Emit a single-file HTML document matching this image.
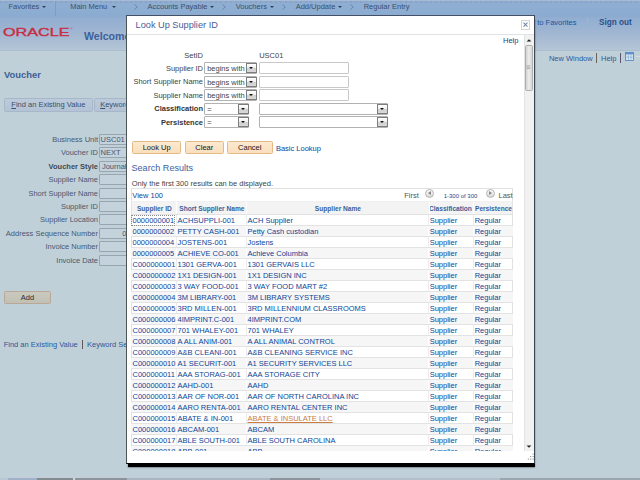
<!DOCTYPE html>
<html lang="en"><head><meta charset="utf-8"><title>Voucher - Look Up Supplier ID</title>
<style>
html,body{margin:0;padding:0}
body{width:640px;height:480px;overflow:hidden;position:relative;background:#c0d0d9;font-family:"Liberation Sans",Arial,sans-serif;font-size:7.5px;color:#46535f}
*{box-sizing:border-box}
.t{position:absolute;white-space:nowrap;line-height:10px;height:10px}
.b{font-weight:bold}
.r8{text-align:right}
#hdr{position:absolute;left:0;top:0;width:640px;height:51px;background:linear-gradient(#8fafd3 0,#8cabd0 15.5px,#8aa8cd 16px,#90add1 17px,#99b2d2 26px,#a4b8d2 36px,#b4c6d7 50px)}
#hdrline{position:absolute;left:0;top:50px;width:640px;height:1px;background:#adbccf}
#navdash{position:absolute;left:0;top:1px;width:640px;height:2px;background:repeating-linear-gradient(90deg,#8a9fcb 0,#8a9fcb 2.2px,#90abcb 2.2px,#90abcb 5px);opacity:.85}
#navtop{position:absolute;left:0;top:0;width:640px;height:1px;background:#a5bbd6}
.nav{color:#3b506f}
.tri{position:absolute;width:0;height:0;border-left:2.4px solid transparent;border-right:2.4px solid transparent;border-top:2.8px solid #303f55}
.chev{position:absolute;width:4px;height:6px}
.vdiv{position:absolute;width:1px;background:#7f9dc2}
.lnk{color:#2b5899}
.plbl{color:#4a5870}
.pin{position:absolute;height:11px;border:1px solid #98a5b0;background:#c3d2db;border-radius:1px;color:#47566f;line-height:9.6px;padding-left:0.2px;white-space:nowrap;overflow:hidden}
.tab{position:absolute;top:98px;height:13.6px;border:1px solid #a7b7c9;border-radius:1.5px;background:linear-gradient(#bccbdb,#b3c3d5);color:#3c4f6b;text-align:center;line-height:11.8px;white-space:nowrap;overflow:hidden}
#addbtn{position:absolute;left:4px;top:291.2px;width:46.8px;height:12.6px;border:1px solid #b9a898;border-radius:1.5px;background:linear-gradient(#c9c9bf,#c0c0b4);color:#2b2b33;text-align:center;line-height:12.4px}
/* modal */
#shadow{position:absolute;left:127.6px;top:18px;width:407.6px;height:448.6px;background:#000;box-shadow:0 0.6px 1.6px rgba(0,0,0,.55)}
#mbox{position:absolute;left:126.2px;top:15px;width:408.8px;height:449px;background:#fff;border:1px solid #445068;border-left-color:#4b5558;border-right-color:#3c4652;border-bottom-color:#000}
#mtitle{left:135.6px;top:19.9px;font-size:9.2px;line-height:11px;height:11px;color:#46609a}
#msep{position:absolute;left:127.2px;top:33.6px;width:406.8px;height:1.4px;background:#dfe3e6}
#close{position:absolute;left:521px;top:20.4px;width:9px;height:9.2px;border:1px solid #d4d4d4;background:#fff}
#sbar{position:absolute;left:524px;top:35px;width:10px;height:416.4px;background:#f1f1f1;border-left:1px solid #e3e3e3}
#thumb{position:absolute;left:524.8px;top:45.4px;width:7.8px;height:45.4px;border:1px solid #aeaeae;border-radius:1.5px;background:linear-gradient(90deg,#d0d0d0,#ececec 45%,#d6d6d6)}
.mlbl{color:#444}
.sel{position:absolute;height:11.5px;border:1px solid #b2b2b2;border-radius:1px;background:#fff;color:#444;line-height:12px;padding-left:2px;white-space:nowrap}
.sel i{position:absolute;right:-0.6px;top:-0.4px;width:10.4px;height:10.4px;border:1px solid #7d7d7d;background:linear-gradient(#fff 0,#efefef 48%,#cfcfcf 52%,#dadada);display:block}
.sel i:after{content:"";position:absolute;left:2px;top:3.6px;border-left:2.2px solid transparent;border-right:2.2px solid transparent;border-top:2.3px solid #111}
.inp{position:absolute;height:11.5px;border:1px solid #c8c8c8;background:#fff;border-radius:1px}
.btn{position:absolute;top:141px;height:12.8px;border:1px solid #e3b986;border-radius:1.5px;background:linear-gradient(#fce9cf,#f9dfbd);color:#15151f;text-align:center;line-height:12.4px}
.ml{color:#0d4596}
#tbl{position:absolute;left:131.2px;top:188.2px;width:381.6px;height:263.2px;border-top:1px solid #e1e1e1;border-left:1px solid #e1e1e1;border-right:1px solid #e1e1e1;overflow:hidden;background:#fff}
#thead{position:absolute;left:131.2px;top:201px;width:381.6px;height:14px;background:#f3f3f3;border:1px solid #e3e3e3;border-top-color:#f0f0f0}
.th{position:absolute;top:204px;font-size:6.6px;font-weight:bold;color:#3a5f99;line-height:9px;height:9px;white-space:nowrap;text-align:center}
.cdiv{position:absolute;top:202px;width:1px;height:12px;background:#fff}
#rows{position:absolute;left:131.2px;top:215px;width:381.6px;height:236.4px;overflow:hidden}
.r{position:absolute;left:0;width:381.6px;height:11px;border-bottom:1px solid #e3e3e3;line-height:10px;color:#0d4596;white-space:nowrap;background-image:linear-gradient(90deg,transparent 44.9px,#ececec 44.9px,#ececec 45.9px,transparent 45.9px,transparent 115px,#ececec 115px,#ececec 116px,transparent 116px,transparent 297.2px,#ececec 297.2px,#ececec 298.2px,transparent 298.2px,transparent 342.5px,#ececec 342.5px,#ececec 343.5px,transparent 343.5px)}
.r.alt{background-color:#f6f6f6;background-image:linear-gradient(90deg,transparent 44.9px,#fff 44.9px,#fff 45.9px,transparent 45.9px,transparent 115px,#fff 115px,#fff 116px,transparent 116px,transparent 297.2px,#fff 297.2px,#fff 298.2px,transparent 298.2px,transparent 342.5px,#fff 342.5px,#fff 343.5px,transparent 343.5px)}
.r span{position:absolute;top:1px}
.c1{left:1.3px}.c2{left:46.3px}.c3{left:116.3px}.c4{left:298.5px}.c5{left:343.5px}
.hov{color:#c97d42;text-decoration:underline;text-decoration-thickness:0.7px;text-underline-offset:0.8px}
.foc{outline:1px dotted #8a8a8a;outline-offset:0px}
.circ{position:absolute;width:9px;height:9px;border-radius:50%;border:1px solid #b5b5b5;background:linear-gradient(#fdfdfd,#d9d9d9)}
.circ:after{content:"";position:absolute;top:1.6px;border-top:2px solid transparent;border-bottom:2px solid transparent}
.circ.l:after{left:1.5px;border-right:3px solid #8a8a8a}
.circ.rr:after{left:2.6px;border-left:3px solid #8a8a8a}

</style></head>
<body>
<div id="hdr"></div><div id="navtop"></div><div id="navdash"></div><div id="hdrline"></div>
<span class="t nav" style="left:8.5px;top:1.6px">Favorites</span><i class="tri" style="left:41.8px;top:6px"></i>
<div class="vdiv" style="left:55px;top:1px;height:14.5px"></div>
<span class="t nav" style="left:70.2px;top:1.6px">Main Menu</span><i class="tri" style="left:112.4px;top:6px"></i>
<svg class="chev" style="left:133.5px;top:4px" viewBox="0 0 4 6"><polyline points="0.5,0.4 3.2,3 0.5,5.6" fill="none" stroke="#5b7ba6" stroke-width="0.8"/></svg>
<span class="t nav" style="left:147.5px;top:1.6px">Accounts Payable</span><i class="tri" style="left:210px;top:6px"></i>
<svg class="chev" style="left:222px;top:4px" viewBox="0 0 4 6"><polyline points="0.5,0.4 3.2,3 0.5,5.6" fill="none" stroke="#5b7ba6" stroke-width="0.8"/></svg>
<span class="t nav" style="left:235.7px;top:1.6px">Vouchers</span><i class="tri" style="left:269.8px;top:6px"></i>
<svg class="chev" style="left:282px;top:4px" viewBox="0 0 4 6"><polyline points="0.5,0.4 3.2,3 0.5,5.6" fill="none" stroke="#5b7ba6" stroke-width="0.8"/></svg>
<span class="t nav" style="left:295.7px;top:1.6px">Add/Update</span><i class="tri" style="left:337.8px;top:6px"></i>
<svg class="chev" style="left:350px;top:4px" viewBox="0 0 4 6"><polyline points="0.5,0.4 3.2,3 0.5,5.6" fill="none" stroke="#5b7ba6" stroke-width="0.8"/></svg>
<span class="t nav" style="left:363.7px;top:1.6px">Regular Entry</span>
<svg style="position:absolute;left:2px;top:25px;width:74px;height:14px" viewBox="0 0 74 14"><text x="1" y="11.1" font-family="Liberation Sans, Arial, sans-serif" font-size="11.3" fill="#c92c42" stroke="#c92c42" stroke-width="0.35" textLength="66.6" lengthAdjust="spacingAndGlyphs">ORACLE</text><text x="68.6" y="4.8" font-size="2.6" fill="#c92c42" font-family="Liberation Sans, sans-serif">®</text></svg>
<span class="t b" style="left:84px;top:29.6px;font-size:10.6px;line-height:13px;height:13px;color:#3c619b">Welcome</span>
<span class="t lnk" style="left:500px;width:76.4px;text-align:right;top:17.5px;color:#22529a">Add to Favorites</span>
<div class="vdiv" style="left:587.4px;top:17.5px;height:8px;background:#9fb6d2"></div>
<span class="t b" style="left:599px;top:16.6px;font-size:8.2px;line-height:11px;height:11px;color:#2b5089">Sign out</span>
<span class="t lnk" style="left:548.9px;top:53.6px">New Window</span>
<div class="vdiv" style="left:596px;top:53px;height:9.5px;background:#6d6258"></div>
<span class="t lnk" style="left:601px;top:53.6px">Help</span>
<div class="vdiv" style="left:619.8px;top:53px;height:9.5px;background:#5b5570"></div>
<svg style="position:absolute;left:625px;top:52.4px;width:9px;height:8.8px" viewBox="0 0 9 8.8"><rect x="0.4" y="0.4" width="8.2" height="8" fill="#d9e6f2" stroke="#4b7fc0" stroke-width="0.8"/><rect x="0.4" y="0.4" width="8.2" height="2" fill="#5d8fcc"/><path d="M0.4 5.2H8.6M3.4 2.4V8.4M6 2.4V8.4" stroke="#7fa8d8" stroke-width="0.6" fill="none"/></svg>
<div style="position:absolute;left:636px;top:56px;width:4px;height:1px;background:#d5dce2"></div>
<span class="t b" style="left:4px;top:67.6px;font-size:9.4px;line-height:13px;height:13px;color:#3d5f93">Voucher</span>
<div class="tab" style="left:4px;width:88.8px"><u>F</u>ind an Existing Value</div>
<div class="tab" style="left:94px;width:67.4px"><u>K</u>eyword Search</div>
<span class="t plbl r8" style="left:0;width:98px;top:135px">Business Unit</span><div class="pin" style="left:99.4px;top:133.9px;width:60px">USC01</div>
<span class="t plbl r8" style="left:0;width:98px;top:148px">Voucher ID</span><div class="pin" style="left:99.4px;top:147.3px;width:60px">NEXT</div>
<span class="t plbl r8 b" style="left:0;width:98px;top:162px;color:#3f4a55">Voucher Style</span><div class="pin" style="left:99.4px;top:160.7px;width:70px;padding-left:1.5px">Journal Voucher</div>
<span class="t plbl r8" style="left:0;width:98px;top:175px">Supplier Name</span><div class="pin" style="left:99.4px;top:174.1px;width:90px"></div>
<span class="t plbl r8" style="left:0;width:98px;top:189px">Short Supplier Name</span><div class="pin" style="left:99.4px;top:187.5px;width:60px"></div>
<span class="t plbl r8" style="left:0;width:98px;top:202px">Supplier ID</span><div class="pin" style="left:99.4px;top:200.9px;width:60px"></div>
<span class="t plbl r8" style="left:0;width:98px;top:215px">Supplier Location</span><div class="pin" style="left:99.4px;top:214.3px;width:60px"></div>
<span class="t plbl r8" style="left:0;width:98px;top:229px">Address Sequence Number</span><div class="pin" style="left:99.4px;top:227.7px;width:28.6px;text-align:right;padding-right:0.6px">0</div>
<span class="t plbl r8" style="left:0;width:98px;top:242px">Invoice Number</span><div class="pin" style="left:99.4px;top:241.1px;width:60px"></div>
<span class="t plbl r8" style="left:0;width:98px;top:256px">Invoice Date</span><div class="pin" style="left:99.4px;top:254.5px;width:50px"></div>
<div id="addbtn">Add</div>
<span class="t lnk" style="left:3.7px;top:340px">Find an Existing Value</span>
<div class="vdiv" style="left:82px;top:339.5px;height:9.3px;background:#5f5a58"></div>
<span class="t lnk" style="left:87px;top:340px">Keyword Search</span>
<div style="position:absolute;left:8px;top:477px;width:632px;height:1px;background:linear-gradient(90deg,#c9ccd8 0,#c9ccd8 120px,#c3cdd8 120px,#c3cdd8 100%)"></div>
<div style="position:absolute;left:0;top:478px;width:640px;height:2px;background:linear-gradient(90deg,#b9c6d6 0,#b9c6d6 8px,#9fb0c9 8px,#9fb0c9 37px,#7f8c90 37px,#7f8c90 73px,#cfd6dc 73px,#cfd6dc 75px,#8a949a 75px,#8a949a 127px,#a9b6c2 127px,#a9b6c2 270px,#8a949a 270px,#8a949a 320px,#b2c0cb 320px,#b2c0cb 500px,#9aa6b0 500px,#9aa6b0 640px)"></div>
<div id="shadow"></div>
<div id="modal">
<div id="mbox"></div>
<span class="t" id="mtitle">Look Up Supplier ID</span>
<div id="close"><svg viewBox="0 0 7 7.2" style="position:absolute;left:0;top:0;width:7px;height:7.2px"><path d="M1.5 1.6L5.5 5.6M5.5 1.6L1.5 5.6" stroke="#7688a2" stroke-width="1.1" fill="none"/></svg></div>
<div id="msep"></div>
<div id="sbar"></div>
<svg style="position:absolute;left:526px;top:38.6px;width:6px;height:3px" viewBox="0 0 6 3"><polygon points="0.6,2.6 3,0.3 5.4,2.6" fill="#222"/></svg>
<div id="thumb"></div>
<svg style="position:absolute;left:526.4px;top:65.2px;width:5px;height:5px" viewBox="0 0 5 5"><path d="M0.6 0.8H4.2M0.6 2.2H4.2M0.6 3.6H4.2" stroke="#8d8d8d" stroke-width="0.6" fill="none"/></svg>
<svg style="position:absolute;left:526px;top:445px;width:6px;height:3px" viewBox="0 0 6 3"><polygon points="0.6,0.4 3,2.7 5.4,0.4" fill="#222"/></svg>
<span class="t ml" style="left:503px;top:35.6px">Help</span>
<span class="t mlbl r8" style="left:133px;width:70px;top:51px">SetID</span><span class="t mlbl" style="left:259.2px;top:51px">USC01</span>
<span class="t mlbl r8" style="left:133px;width:70px;top:64px">Supplier ID</span><div class="sel" style="left:204.2px;top:62.2px;width:53px">begins with<i></i></div><div class="inp" style="left:258.8px;top:62.2px;width:89.8px"></div>
<span class="t mlbl r8" style="left:133px;width:70px;top:77px">Short Supplier Name</span><div class="sel" style="left:204.2px;top:76px;width:53px">begins with<i></i></div><div class="inp" style="left:258.8px;top:76.2px;width:89.8px"></div>
<span class="t mlbl r8" style="left:133px;width:70px;top:91px">Supplier Name</span><div class="sel" style="left:204.2px;top:89.2px;width:53px">begins with<i></i></div><div class="inp" style="left:258.8px;top:89.2px;width:89.8px"></div>
<span class="t mlbl r8 b" style="left:133px;width:70px;top:104px;color:#333">Classification</span><div class="sel" style="left:204.2px;top:103px;width:44.8px">=<i></i></div><div class="sel" style="left:258.8px;top:103px;width:129.2px"><i></i></div>
<span class="t mlbl r8 b" style="left:133px;width:70px;top:118px;color:#333">Persistence</span><div class="sel" style="left:204.2px;top:116.2px;width:44.8px">=<i></i></div><div class="sel" style="left:258.8px;top:116.2px;width:129.2px"><i></i></div>
<div class="btn" style="left:132px;width:49.2px">Look Up</div>
<div class="btn" style="left:185px;width:38.6px">Clear</div>
<div class="btn" style="left:227px;width:45.6px">Cancel</div>
<span class="t ml" style="left:275.9px;top:144px">Basic Lookup</span>
<span class="t" style="left:131.5px;top:162px;font-size:9.1px;line-height:12px;height:12px;color:#3b62a0">Search Results</span>
<span class="t mlbl" style="left:131.7px;top:179px">Only the first 300 results can be displayed.</span>
<div id="tbl"></div>
<span class="t ml" style="left:132.3px;top:191px">View 100</span>
<span class="t" style="left:404.2px;top:191px;color:#555">First</span>
<div class="circ l" style="left:425px;top:188.8px"></div>
<span class="t ml" style="left:443.7px;top:191px;font-size:6px;color:#1d478f">1-300 of 300</span>
<div class="circ rr" style="left:485.5px;top:188.8px"></div>
<span class="t" style="left:498.5px;top:191px;color:#555">Last</span>
<div id="thead"></div>
<span class="th" style="left:132.2px;width:44.3px">Supplier ID</span>
<span class="th" style="left:177.5px;width:68.7px">Short Supplier Name</span>
<span class="th" style="left:247.2px;width:181.5px">Supplier Name</span>
<span class="th" style="left:428.5px;width:43.8px">Classification</span>
<span class="th" style="left:474.5px;width:38px">Persistence</span>
<div id="rows">
<div class="r" style="top:0.0px"><span class="c1"><a class="foc">0000000001</a></span><span class="c2"><a>ACHSUPPLI-001</a></span><span class="c3"><a>ACH Supplier</a></span><span class="c4"><a>Supplier</a></span><span class="c5"><a>Regular</a></span></div>
<div class="r alt" style="top:11.0px"><span class="c1"><a>0000000002</a></span><span class="c2"><a>PETTY CASH-001</a></span><span class="c3"><a>Petty Cash custodian</a></span><span class="c4"><a>Supplier</a></span><span class="c5"><a>Regular</a></span></div>
<div class="r" style="top:22.0px"><span class="c1"><a>0000000004</a></span><span class="c2"><a>JOSTENS-001</a></span><span class="c3"><a>Jostens</a></span><span class="c4"><a>Supplier</a></span><span class="c5"><a>Regular</a></span></div>
<div class="r alt" style="top:33.0px"><span class="c1"><a>0000000005</a></span><span class="c2"><a>ACHIEVE CO-001</a></span><span class="c3"><a>Achieve Columbia</a></span><span class="c4"><a>Supplier</a></span><span class="c5"><a>Regular</a></span></div>
<div class="r" style="top:44.0px"><span class="c1"><a>C000000001</a></span><span class="c2"><a>1301 GERVA-001</a></span><span class="c3"><a>1301 GERVAIS LLC</a></span><span class="c4"><a>Supplier</a></span><span class="c5"><a>Regular</a></span></div>
<div class="r alt" style="top:55.0px"><span class="c1"><a>C000000002</a></span><span class="c2"><a>1X1 DESIGN-001</a></span><span class="c3"><a>1X1 DESIGN INC</a></span><span class="c4"><a>Supplier</a></span><span class="c5"><a>Regular</a></span></div>
<div class="r" style="top:66.0px"><span class="c1"><a>C000000003</a></span><span class="c2"><a>3 WAY FOOD-001</a></span><span class="c3"><a>3 WAY FOOD MART #2</a></span><span class="c4"><a>Supplier</a></span><span class="c5"><a>Regular</a></span></div>
<div class="r alt" style="top:77.0px"><span class="c1"><a>C000000004</a></span><span class="c2"><a>3M LIBRARY-001</a></span><span class="c3"><a>3M LIBRARY SYSTEMS</a></span><span class="c4"><a>Supplier</a></span><span class="c5"><a>Regular</a></span></div>
<div class="r" style="top:88.0px"><span class="c1"><a>C000000005</a></span><span class="c2"><a>3RD MILLEN-001</a></span><span class="c3"><a>3RD MILLENNIUM CLASSROOMS</a></span><span class="c4"><a>Supplier</a></span><span class="c5"><a>Regular</a></span></div>
<div class="r alt" style="top:99.0px"><span class="c1"><a>C000000006</a></span><span class="c2"><a>4IMPRINT.C-001</a></span><span class="c3"><a>4IMPRINT.COM</a></span><span class="c4"><a>Supplier</a></span><span class="c5"><a>Regular</a></span></div>
<div class="r" style="top:110.0px"><span class="c1"><a>C000000007</a></span><span class="c2"><a>701 WHALEY-001</a></span><span class="c3"><a>701 WHALEY</a></span><span class="c4"><a>Supplier</a></span><span class="c5"><a>Regular</a></span></div>
<div class="r alt" style="top:121.0px"><span class="c1"><a>C000000008</a></span><span class="c2"><a>A ALL ANIM-001</a></span><span class="c3"><a>A ALL ANIMAL CONTROL</a></span><span class="c4"><a>Supplier</a></span><span class="c5"><a>Regular</a></span></div>
<div class="r" style="top:132.0px"><span class="c1"><a>C000000009</a></span><span class="c2"><a>A&amp;B CLEANI-001</a></span><span class="c3"><a>A&amp;B CLEANING SERVICE INC</a></span><span class="c4"><a>Supplier</a></span><span class="c5"><a>Regular</a></span></div>
<div class="r alt" style="top:143.0px"><span class="c1"><a>C000000010</a></span><span class="c2"><a>A1 SECURIT-001</a></span><span class="c3"><a>A1 SECURITY SERVICES LLC</a></span><span class="c4"><a>Supplier</a></span><span class="c5"><a>Regular</a></span></div>
<div class="r" style="top:154.0px"><span class="c1"><a>C000000011</a></span><span class="c2"><a>AAA STORAG-001</a></span><span class="c3"><a>AAA STORAGE CITY</a></span><span class="c4"><a>Supplier</a></span><span class="c5"><a>Regular</a></span></div>
<div class="r alt" style="top:165.0px"><span class="c1"><a>C000000012</a></span><span class="c2"><a>AAHD-001</a></span><span class="c3"><a>AAHD</a></span><span class="c4"><a>Supplier</a></span><span class="c5"><a>Regular</a></span></div>
<div class="r" style="top:176.0px"><span class="c1"><a>C000000013</a></span><span class="c2"><a>AAR OF NOR-001</a></span><span class="c3"><a>AAR OF NORTH CAROLINA INC</a></span><span class="c4"><a>Supplier</a></span><span class="c5"><a>Regular</a></span></div>
<div class="r alt" style="top:187.0px"><span class="c1"><a>C000000014</a></span><span class="c2"><a>AARO RENTA-001</a></span><span class="c3"><a>AARO RENTAL CENTER INC</a></span><span class="c4"><a>Supplier</a></span><span class="c5"><a>Regular</a></span></div>
<div class="r" style="top:198.0px"><span class="c1"><a>C000000015</a></span><span class="c2"><a>ABATE &amp; IN-001</a></span><span class="c3"><a class="hov">ABATE &amp; INSULATE LLC</a></span><span class="c4"><a>Supplier</a></span><span class="c5"><a>Regular</a></span></div>
<div class="r alt" style="top:209.0px"><span class="c1"><a>C000000016</a></span><span class="c2"><a>ABCAM-001</a></span><span class="c3"><a>ABCAM</a></span><span class="c4"><a>Supplier</a></span><span class="c5"><a>Regular</a></span></div>
<div class="r" style="top:220.0px"><span class="c1"><a>C000000017</a></span><span class="c2"><a>ABLE SOUTH-001</a></span><span class="c3"><a>ABLE SOUTH CAROLINA</a></span><span class="c4"><a>Supplier</a></span><span class="c5"><a>Regular</a></span></div>
<div class="r alt" style="top:231.0px"><span class="c1"><a>C000000018</a></span><span class="c2"><a>ABB-001</a></span><span class="c3"><a>ABB</a></span><span class="c4"><a>Supplier</a></span><span class="c5"><a>Regular</a></span></div>
</div>
<div class="cdiv" style="left:176.4px"></div><div class="cdiv" style="left:246.2px"></div><div class="cdiv" style="left:428.6px"></div><div class="cdiv" style="left:473.4px"></div>
<svg style="position:absolute;left:526.5px;top:453.2px;width:7.5px;height:8px" viewBox="0 0 7.5 8"><g fill="#7a7a7a"><rect x="5.6" y="0.6" width="1" height="1"/><rect x="3.2" y="3.1" width="1" height="1"/><rect x="5.6" y="3.1" width="1" height="1"/><rect x="0.8" y="5.6" width="1" height="1"/><rect x="3.2" y="5.6" width="1" height="1"/><rect x="5.6" y="5.6" width="1" height="1"/></g></svg>
</div>
</body></html>
